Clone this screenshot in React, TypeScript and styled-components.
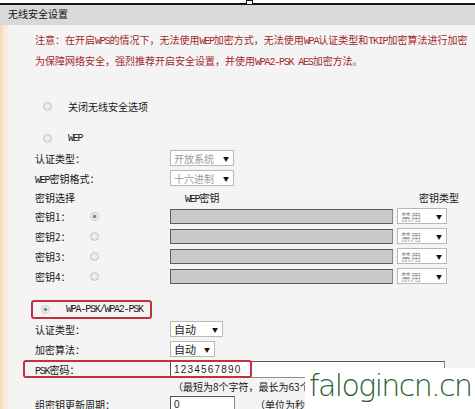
import React from 'react'
import styled, { createGlobalStyle } from 'styled-components'

const GlobalStyle = createGlobalStyle`
  html, body { margin: 0; padding: 0; background: #f4f4f4; }
  body {
    font-family: "Noto Sans CJK SC", "Noto Sans", sans-serif;
    font-size: 10px;
    color: #161616;
  }
  * { box-sizing: border-box; }
`

const Page = styled.div`
  position: relative;
  width: 475px;
  height: 409px;
  overflow: hidden;
  background: #f4f4f4;
`

const TopEdge = styled.div`
  position: relative;
  height: 5px;
  background: #fff;
  border-bottom: 2px solid #151515;
`

const Handle = styled.span`
  position: absolute;
  left: 246px;
  top: 0;
  width: 7px;
  height: 4px;
  background: #fff;
  border: 1px solid #151515;
  border-bottom: none;
`

const Header = styled.div`
  height: 20px;
  background: #d9d9d9;
  padding: 0 0 3px 8px;
  display: flex;
  align-items: center;
  color: #111;
`

const Body = styled.div`
  height: 384px;
  padding: 5px 0 0 35px;
  background: linear-gradient(to right, #f7d8b4 0, #fbe6cf 3px, #f8eee3 7px, #f4f4f4 11px);
`

const Notice = styled.div`
  color: #a3272b;
  line-height: 19px;
  white-space: nowrap;
`

const Latin = styled.span`
  font-family: "Liberation Mono", monospace;
  font-size: 10px;
  letter-spacing: -1.2px;
`

const OptionRow = styled.div<{ $top: number }>`
  display: flex;
  align-items: center;
  gap: 16px;
  height: 20px;
  margin-top: ${p => p.$top}px;
  padding-left: 8px;
`

const Radio = styled.span<{ $checked?: boolean }>`
  flex: none;
  width: 9px;
  height: 9px;
  border-radius: 50%;
  border: 1px solid #c6c6c6;
  background: ${p => p.$checked
    ? 'radial-gradient(circle, #8c8c8c 0 1.6px, #f0f0f0 2.2px)'
    : 'radial-gradient(circle, #f6f6f6 0, #dcdcdc 100%)'};
`

const FieldRow = styled.div`
  position: relative;
  display: grid;
  grid-template-columns: 135px auto;
  align-items: center;
  height: 20px;
  white-space: nowrap;
`

const Select = styled.div<{ $w: number; $muted?: boolean }>`
  width: ${p => p.$w}px;
  height: 16px;
  display: flex;
  align-items: center;
  justify-content: space-between;
  padding: 0 4px 0 3px;
  background: #fff;
  border: 1px solid #b8b8b8;
  font-size: ${p => (p.$muted ? 10 : 11)}px;
  color: ${p => (p.$muted ? '#9a9a9a' : '#222')};
`

const Arrow = styled.span`
  font-size: 6px;
  color: #111;
`

const KeyRow = styled.div<{ $h?: number }>`
  display: grid;
  grid-template-columns: 55px 80px 223px 50px;
  align-items: center;
  height: ${p => p.$h ?? 20}px;
  white-space: nowrap;
`

const KeyHead = styled.span<{ $pad?: number }>`
  padding-left: ${p => p.$pad ?? 0}px;
`

const KeyInput = styled.div`
  width: 223px;
  height: 15px;
  background: #c9c9c9;
  border: 1px solid #5c5c5c;
  border-right-color: #8a8a8a;
`

const KeySelect = styled(Select)`
  margin-left: 4px;
`

const Highlight = styled.div`
  display: inline-flex;
  align-items: center;
  gap: 16px;
  height: 19px;
  margin: 14px 0 0 -4px;
  padding: 0 7px 0 8px;
  border: 2px solid #c62f3d;
  border-radius: 3px;
`

const HighlightBox = styled.span`
  position: absolute;
  left: -12px;
  top: 1px;
  width: 229px;
  height: 18px;
  border: 2px solid #c62f3d;
  border-radius: 3px;
`

const TextInput = styled.div<{ $w: number }>`
  width: ${p => p.$w}px;
  height: 17px;
  display: flex;
  align-items: center;
  padding-left: 3px;
  background: #fff;
  border: 1px solid #8c8c8c;
  border-top-color: #555;
  border-left-color: #555;
  font-family: "Liberation Sans", sans-serif;
  font-size: 10px;
  letter-spacing: 1.2px;
  color: #222;
`

const Hint = styled.div`
  height: 15px;
  display: flex;
  align-items: center;
  padding-left: 138px;
  white-space: nowrap;
`

const Unit = styled.span`
  margin-left: 20px;
`

const Controls = styled.div`
  display: flex;
  align-items: center;
`

const Watermark = styled.div`
  position: absolute;
  left: 305px;
  top: 368px;
  right: 0;
  bottom: 0;
  background: #fff;
  display: flex;
  align-items: flex-start;
  padding-left: 4px;
  white-space: nowrap;
  font-family: "DejaVu Sans", sans-serif;
  font-weight: 200;
  font-size: 30px;
  line-height: 35px;
  letter-spacing: -1.6px;
  color: #285f31;
`

const keys = [1, 2, 3, 4]

export default function App() {
  return (
    <Page>
      <GlobalStyle />
      <TopEdge>
        <Handle />
      </TopEdge>
      <Header>无线安全设置</Header>
      <Body>
        <Notice>
          <div>
            注意：在开启<Latin>WPS</Latin>的情况下，无法使用<Latin>WEP</Latin>加密方式，无法使用<Latin>WPA</Latin>认证类型和<Latin>TKIP</Latin>加密算法进行加密
          </div>
          <div>
            为保障网络安全，强烈推荐开启安全设置，并使用<Latin>WPA2-PSK AES</Latin>加密方法。
          </div>
        </Notice>

        <OptionRow $top={24}>
          <Radio />
          <span>关闭无线安全选项</span>
        </OptionRow>

        <OptionRow $top={12}>
          <Radio />
          <Latin>WEP</Latin>
        </OptionRow>

        <FieldRow>
          <span>认证类型：</span>
          <Select $w={64} $muted>开放系统<Arrow>▼</Arrow></Select>
        </FieldRow>
        <FieldRow>
          <span><Latin>WEP</Latin>密钥格式：</span>
          <Select $w={64} $muted>十六进制<Arrow>▼</Arrow></Select>
        </FieldRow>

        <KeyRow $h={18}>
          <KeyHead>密钥选择</KeyHead>
          <span />
          <KeyHead $pad={15}><Latin>WEP</Latin>密钥</KeyHead>
          <KeyHead $pad={26}>密钥类型</KeyHead>
        </KeyRow>
        {keys.map(k => (
          <KeyRow key={k}>
            <span>密钥{k}：</span>
            <Radio $checked={k === 1} />
            <KeyInput />
            <KeySelect $w={50} $muted>禁用<Arrow>▼</Arrow></KeySelect>
          </KeyRow>
        ))}

        <Highlight>
          <Radio $checked />
          <Latin>WPA-PSK/WPA2-PSK</Latin>
        </Highlight>

        <FieldRow>
          <span>认证类型：</span>
          <Select $w={53}>自动<Arrow>▼</Arrow></Select>
        </FieldRow>
        <FieldRow>
          <span>加密算法：</span>
          <Select $w={45}>自动<Arrow>▼</Arrow></Select>
        </FieldRow>
        <FieldRow>
          <HighlightBox />
          <span><Latin>PSK</Latin>密码：</span>
          <TextInput $w={275}>1234567890</TextInput>
        </FieldRow>
        <Hint>（最短为8个字符，最长为63个</Hint>
        <FieldRow>
          <span>组密钥更新周期：</span>
          <Controls>
            <TextInput $w={65}>0</TextInput>
            <Unit>（单位为秒，</Unit>
          </Controls>
        </FieldRow>
      </Body>
      <Watermark>falogincn.cn</Watermark>
    </Page>
  )
}
